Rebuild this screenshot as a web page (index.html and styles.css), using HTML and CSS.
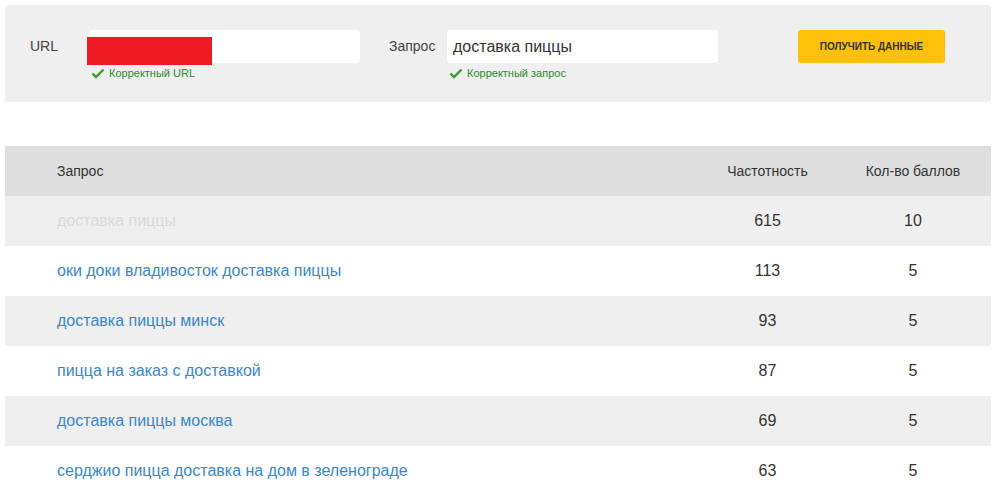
FILE: index.html
```html
<!DOCTYPE html>
<html lang="ru">
<head>
    <meta charset="UTF-8">
    <title>Проверка запроса</title>
    <link rel="stylesheet" href="styles.css">
</head>
<body>
    <div class="panel">
        <div class="field">
            <label class="lbl lbl-url" for="url">URL</label>
            <div class="box">
                <div class="input url-input"><span class="hidden-url"></span></div>
                <div class="ok">
                    <svg width="14" height="11" viewBox="0 0 14 11"><path d="M1.5 5.5 L5 9 L12.5 1.5" fill="none" stroke="#3c9b2e" stroke-width="2.4"/></svg>
                    Корректный URL
                </div>
            </div>
        </div>
        <div class="field">
            <label class="lbl lbl-q" for="q">Запрос</label>
            <div class="box">
                <div class="input">доставка пиццы</div>
                <div class="ok">
                    <svg width="14" height="11" viewBox="0 0 14 11"><path d="M1.5 5.5 L5 9 L12.5 1.5" fill="none" stroke="#3c9b2e" stroke-width="2.4"/></svg>
                    Корректный запрос
                </div>
            </div>
        </div>
        <button class="get">ПОЛУЧИТЬ ДАННЫЕ</button>
    </div>

    <table class="results">
        <thead>
            <tr><th class="c-q">Запрос</th><th class="c-f">Частотность</th><th class="c-b">Кол-во баллов</th></tr>
        </thead>
        <tbody>
            <tr class="main"><td class="c-q">доставка пиццы</td><td class="c-f">615</td><td class="c-b">10</td></tr>
            <tr><td class="c-q"><a href="#">оки доки владивосток доставка пиццы</a></td><td class="c-f">113</td><td class="c-b">5</td></tr>
            <tr><td class="c-q"><a href="#">доставка пиццы минск</a></td><td class="c-f">93</td><td class="c-b">5</td></tr>
            <tr><td class="c-q"><a href="#">пицца на заказ с доставкой</a></td><td class="c-f">87</td><td class="c-b">5</td></tr>
            <tr><td class="c-q"><a href="#">доставка пиццы москва</a></td><td class="c-f">69</td><td class="c-b">5</td></tr>
            <tr><td class="c-q"><a href="#">серджио пицца доставка на дом в зеленограде</a></td><td class="c-f">63</td><td class="c-b">5</td></tr>
        </tbody>
    </table>
</body>
</html>
```

FILE: styles.css
```css
*{
    margin: 0;
    padding: 0;
    box-sizing: border-box;
}
body {
    font-family: "Liberation Sans", Arial, sans-serif;
    margin: 5px;
    width: 986px;
    color: #333;
    background: #fff;
}
.panel{
    display: flex;
    align-items: flex-start;
    height: 97px;
    padding: 25px 0 0 25px;
    background: #efefef;
    border-radius: 4px;
}
.field{
    display: flex;
    align-items: flex-start;
}
.lbl{
    font-size: 14px;
    color: #444;
    line-height: 33px;
}
.lbl-url{
    width: 59px;
}
.lbl-q{
    margin-left: 29px;
    width: 58px;
}
.input{
    width: 271px;
    height: 33px;
    background: #fff;
    border-radius: 3px;
    font-size: 16px;
    line-height: 33px;
    padding-left: 6px;
    color: #333;
}
.url-input{
    position: relative;
    padding: 0;
}
.hidden-url{
    position: absolute;
    left: -2px;
    top: 7px;
    width: 125px;
    height: 28px;
    background: #ed1c24;
}
.ok{
    display: flex;
    align-items: center;
    gap: 4px;
    margin-top: 4px;
    padding-left: 2px;
    font-size: 11px;
    color: #2b8a2b;
}
.get{
    margin-left: 80px;
    width: 147px;
    height: 33px;
    border: none;
    border-radius: 3px;
    background: #ffc107;
    color: #333;
    font-family: inherit;
    font-size: 10px;
    font-weight: 700;
}
.results{
    margin-top: 44px;
    width: 986px;
    border-collapse: collapse;
    font-size: 16px;
}
.results th{
    height: 50px;
    background: #dedede;
    font-weight: 400;
    font-size: 14px;
    color: #333;
}
.results td{
    height: 50px;
    padding-bottom: 1px;
}
.results tbody tr:nth-child(odd){
    background: #efefef;
}
.c-q{
    text-align: left;
    padding-left: 52px;
}
.c-f{
    width: 135px;
    text-align: center;
}
.c-b{
    width: 156px;
    text-align: center;
}
.main .c-q{
    color: #d9d9d9;
}
.results a{
    color: #3a87c8;
    text-decoration: none;
}
```
